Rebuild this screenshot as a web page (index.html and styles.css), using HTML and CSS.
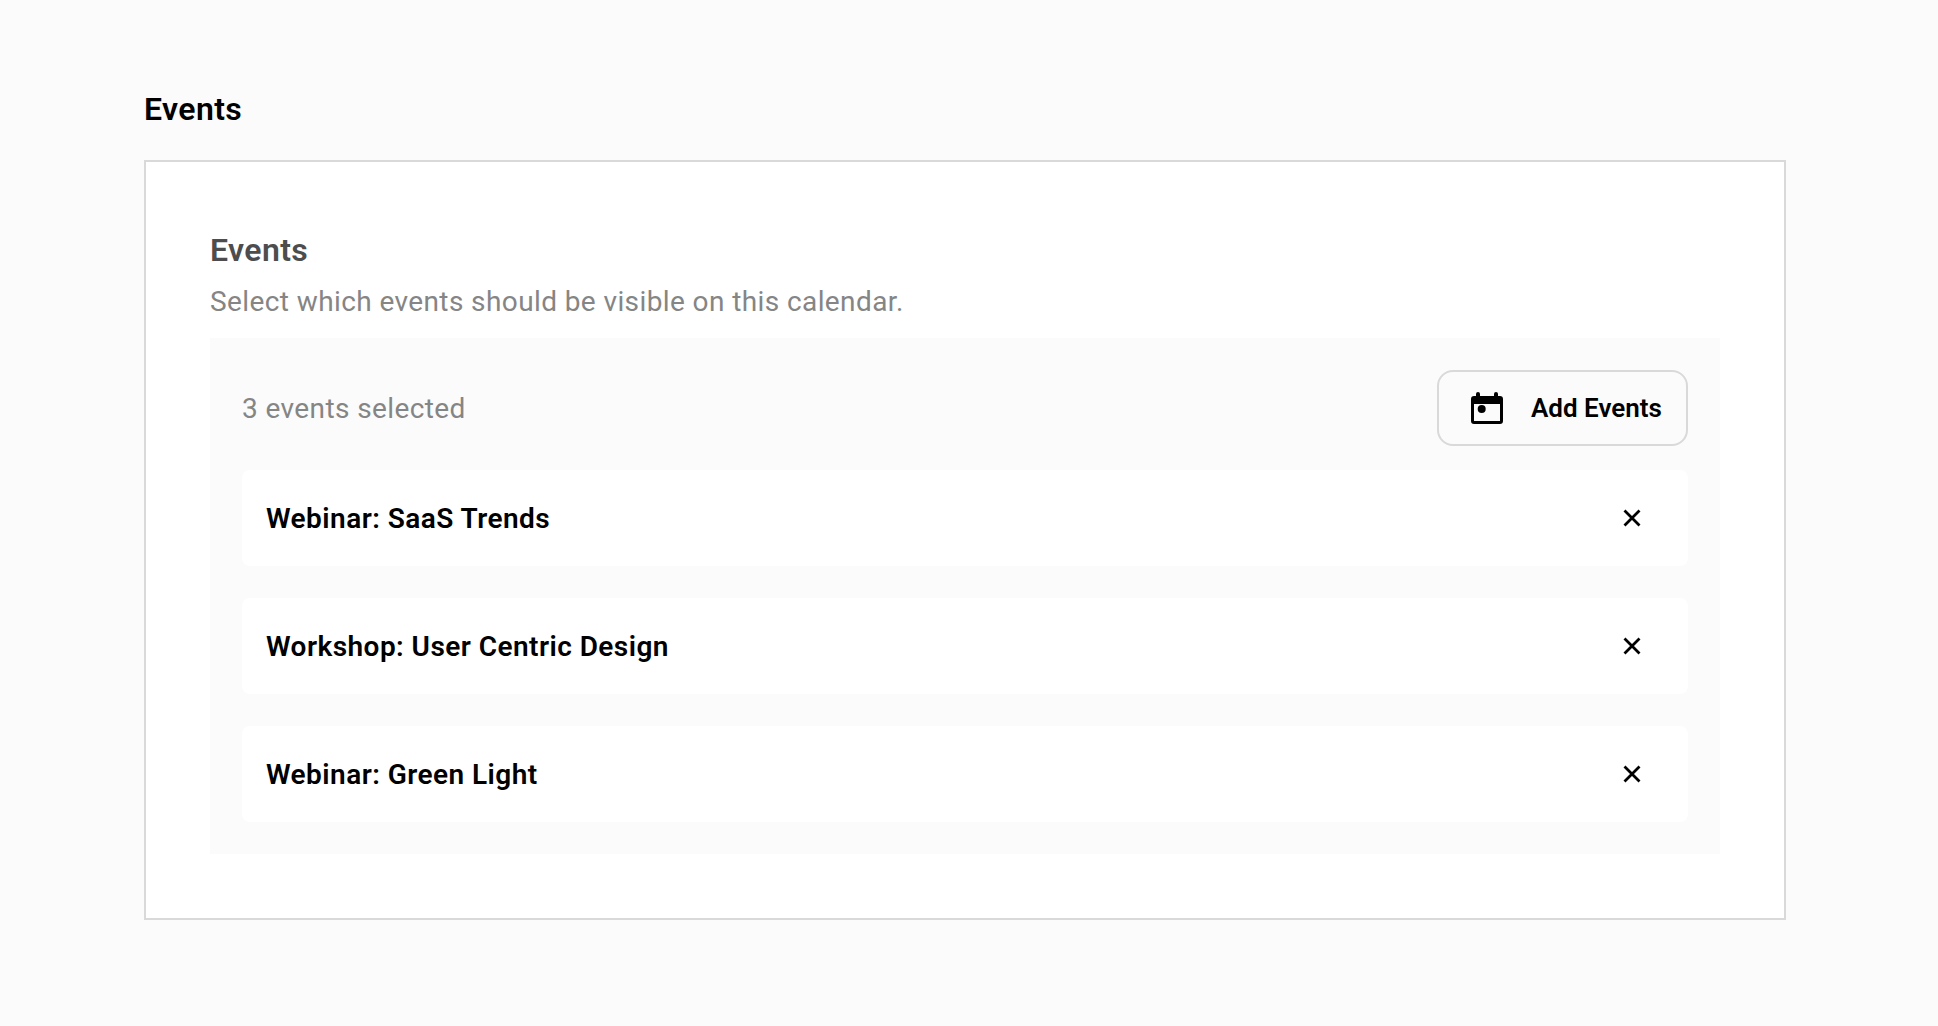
FILE: index.html
```html
<!DOCTYPE html>
<html lang="en">
<head>
<meta charset="utf-8">
<title>Events</title>
<link rel="stylesheet" href="styles.css">
</head>
<body>
<main class="page">
  <h1 class="page-title">Events</h1>
  <section class="card">
    <h2 class="card-title">Events</h2>
    <p class="card-desc">Select which events should be visible on this calendar.</p>
    <div class="panel">
      <div class="panel-head">
        <span class="count">3 events selected</span>
        <button class="add-btn" type="button">
          <svg class="cal-icon" width="32" height="32" viewBox="0 0 32 32" aria-hidden="true">
            <path fill="#000" fill-rule="evenodd" d="M7 0h0a2 2 0 0 1 2 2v2h14V2a2 2 0 0 1 4 0v2h2a3 3 0 0 1 3 3v22a3 3 0 0 1-3 3H3a3 3 0 0 1-3-3V7a3 3 0 0 1 3-3h2V2a2 2 0 0 1 2-2zM3 12v17h26V12z"/>
            <circle cx="10.700" cy="17" r="4" fill="#000"/>
          </svg>
          <span>Add Events</span>
        </button>
      </div>
      <ul class="event-list">
        <li class="event-row"><span>Webinar: SaaS Trends</span><svg class="x-icon" width="18" height="18" viewBox="0 0 18 18" aria-hidden="true"><path d="M1.500 1.500l15 15M16.500 1.500l-15 15" stroke="#000" stroke-width="2.800" fill="none"/></svg></li>
        <li class="event-row"><span>Workshop: User Centric Design</span><svg class="x-icon" width="18" height="18" viewBox="0 0 18 18" aria-hidden="true"><path d="M1.500 1.500l15 15M16.500 1.500l-15 15" stroke="#000" stroke-width="2.800" fill="none"/></svg></li>
        <li class="event-row"><span>Webinar: Green Light</span><svg class="x-icon" width="18" height="18" viewBox="0 0 18 18" aria-hidden="true"><path d="M1.500 1.500l15 15M16.500 1.500l-15 15" stroke="#000" stroke-width="2.800" fill="none"/></svg></li>
      </ul>
    </div>
  </section>
</main>
</body>
</html>
```
FILE: styles.css
```css
* { box-sizing: border-box; }
html, body { margin: 0; padding: 0; }
body {
  background: #fbfbfb;
  font-family: Roboto, "Liberation Sans", sans-serif;
  color: #000;
  min-height: 1026px;
}
.page { padding: 89px 152px 0 144px; }
.page-title {
  margin: 0 0 31px;
  font-size: 32px;
  line-height: 40px;
  font-weight: 600;
  letter-spacing: 0.4px;
}
.card {
  height: 760px;
  background: #fff;
  border: 2px solid #d9d9d9;
  padding: 72px 64px 64px;
}
.card-title {
  margin: 0;
  font-size: 32px;
  line-height: 32px;
  font-weight: 600;
  color: #4d4d4d;
  letter-spacing: 0.4px;
}
.card-desc {
  margin: 20px 0 0;
  font-size: 28px;
  line-height: 32px;
  color: #858585;
  letter-spacing: 0.4px;
}
.panel {
  margin-top: 20px;
  background: #fbfbfb;
  padding: 32px;
}
.panel-head {
  display: flex;
  align-items: center;
  justify-content: space-between;
  margin-bottom: 24px;
}
.count {
  font-size: 28px;
  color: #858585;
  letter-spacing: 0.4px;
}
.add-btn {
  display: flex;
  align-items: center;
  gap: 28px;
  width: 251px;
  height: 76px;
  padding: 0 24px 0 32px;
  background: transparent;
  border: 2px solid #d9d9d9;
  border-radius: 16px;
  font: 600 26px Roboto, "Liberation Sans", sans-serif;
  color: #000;
}
.cal-icon { flex: none; }
.event-list {
  list-style: none;
  margin: 0;
  padding: 0;
  display: flex;
  flex-direction: column;
  gap: 32px;
}
.event-row {
  display: flex;
  align-items: center;
  justify-content: space-between;
  height: 96px;
  padding: 0 47px 0 24px;
  background: #fff;
  border-radius: 8px;
  font-size: 28px;
  font-weight: 600;
  letter-spacing: 0.45px;
}
```
